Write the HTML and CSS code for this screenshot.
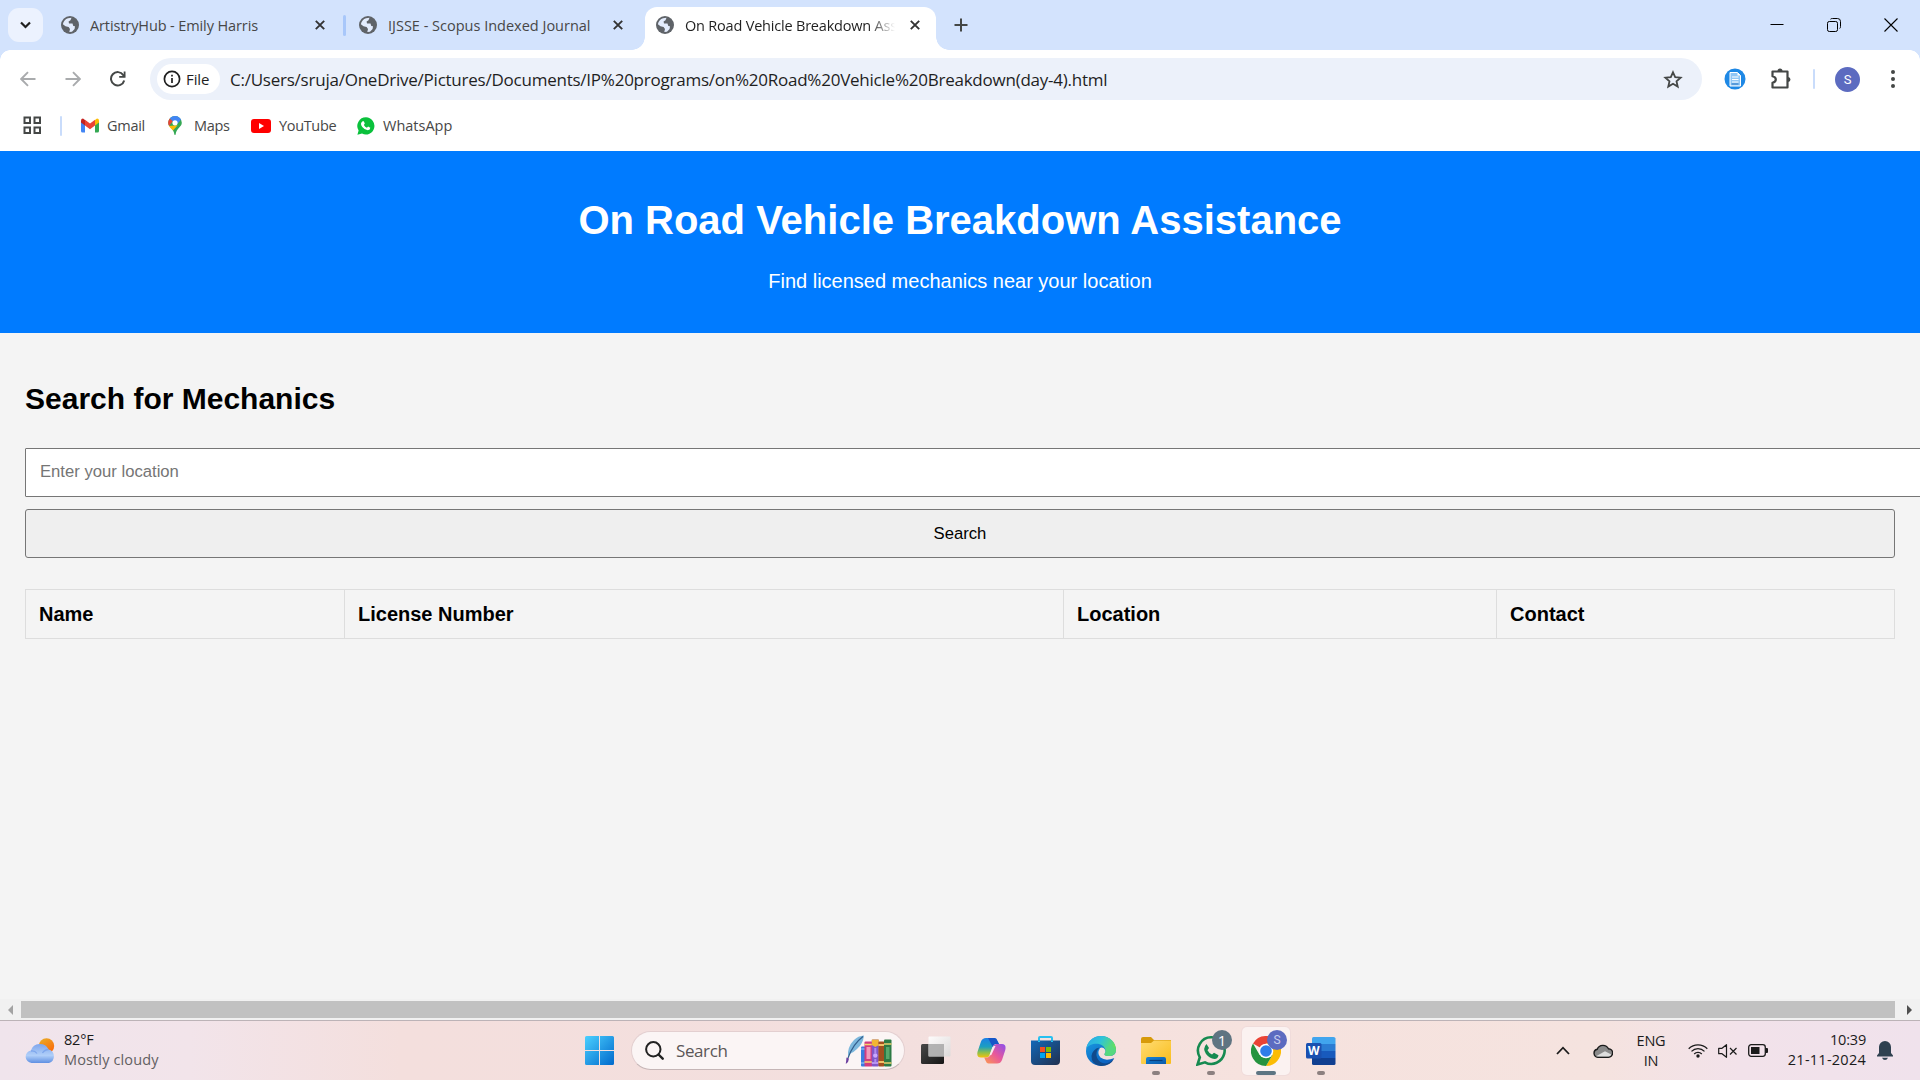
FILE: index.html
```html
<!DOCTYPE html>
<html lang="en">
<head>
<meta charset="utf-8">
<title>On Road Vehicle Breakdown Assistance</title>
<link rel="stylesheet" href="styles.css">
</head>
<body>
<svg class="defs" width="0" height="0" aria-hidden="true">
  <defs>
    <symbol id="globe" viewBox="0 0 18 18"><circle cx="9" cy="9" r="9" fill="#5f6368"/><path d="M7 2.2 10.500 1.800 9.500 4.200 7.600 5.600 8 7.400 11.500 7.600 12.300 10 14 10.200 13.600 13 11 15.800 8.300 15.900 9 13 7.600 11 4.500 10.300 1.900 8.200C2.300 5.200 4.400 3 7 2.200Z" fill="#e3ecfd"/><path d="M12.500 3.200 15.500 6.500 14 8 11.800 6Z" fill="#5f6368"/></symbol>
    <symbol id="cross" viewBox="0 0 10 10"><path d="M.8.8 9.200 9.200M9.200.8.8 9.200" stroke="currentColor" stroke-width="1.900" fill="none"/></symbol>
    <linearGradient id="gWin" x1="0" y1="0" x2="1" y2="1"><stop offset="0" stop-color="#4bd0ff"/><stop offset="1" stop-color="#0069cc"/></linearGradient>
    <linearGradient id="gSun" x1="0" y1="0" x2="0.6" y2="1"><stop offset="0" stop-color="#e8b02a"/><stop offset="1" stop-color="#fb6a08"/></linearGradient>
    <linearGradient id="gCloud" x1="0" y1="0" x2="0" y2="1"><stop offset="0" stop-color="#7fa6ec"/><stop offset=".6" stop-color="#b0cff9"/><stop offset="1" stop-color="#5f8fe2"/></linearGradient>
    <linearGradient id="gDark" x1="0" y1="0" x2="1" y2="1"><stop offset="0" stop-color="#484848"/><stop offset="1" stop-color="#161616"/></linearGradient>
    <linearGradient id="gLight" x1="0" y1="0" x2="1" y2="1"><stop offset="0" stop-color="#fff"/><stop offset="1" stop-color="#d9d9d9"/></linearGradient>
    <linearGradient id="gCopA" x1="0" y1="0" x2="0" y2="1"><stop offset="0" stop-color="#1b7fe8"/><stop offset=".45" stop-color="#1c9fc0"/><stop offset=".75" stop-color="#8fc04a"/><stop offset="1" stop-color="#f5c20b"/></linearGradient>
    <linearGradient id="gCopB" x1="1" y1="0" x2="0" y2="1"><stop offset="0" stop-color="#8a4fee"/><stop offset=".5" stop-color="#e8589b"/><stop offset="1" stop-color="#fd9a4e"/></linearGradient>
    <linearGradient id="gStore" x1="0" y1="0" x2="1" y2="1"><stop offset="0" stop-color="#1268b8"/><stop offset="1" stop-color="#21304f"/></linearGradient>
    <linearGradient id="gEdgeA" x1="0" y1="0" x2="1" y2=".4"><stop offset="0" stop-color="#2aa5e8"/><stop offset=".5" stop-color="#2fc3d8"/><stop offset="1" stop-color="#63e05e"/></linearGradient>
    <linearGradient id="gEdgeB" x1="0" y1="0" x2=".6" y2="1"><stop offset="0" stop-color="#1aa0e4"/><stop offset="1" stop-color="#0b5fc0"/></linearGradient>
    <linearGradient id="gFold" x1="0" y1="0" x2="1" y2="1"><stop offset="0" stop-color="#ffdc73"/><stop offset="1" stop-color="#f9bd1b"/></linearGradient>
    <linearGradient id="gTray" x1="0" y1="0" x2="1" y2="1"><stop offset="0" stop-color="#1783d8"/><stop offset="1" stop-color="#0b5aa8"/></linearGradient>
  </defs>
</svg>

<div class="window">
  <div class="tabstrip">
    <button class="tab-search"><svg width="11" height="8" viewBox="0 0 11 8"><path d="M1 1.500 5.500 6 10 1.500" fill="none" stroke="#1f1f1f" stroke-width="2.200"/></svg></button>
    <div class="tab tab-first"><svg class="globe"><use href="#globe"/></svg><span class="tab-title">ArtistryHub - Emily Harris</span><svg class="cross"><use href="#cross"/></svg></div>
    <i class="tab-divider"></i>
    <div class="tab tab-second"><svg class="globe"><use href="#globe"/></svg><span class="tab-title">IJSSE - Scopus Indexed Journal</span><svg class="cross"><use href="#cross"/></svg></div>
    <div class="tab tab-active"><svg class="globe"><use href="#globe"/></svg><span class="tab-title fade">On Road Vehicle Breakdown Assistance</span><svg class="cross"><use href="#cross"/></svg></div>
    <svg class="new-tab" width="14" height="14" viewBox="0 0 14 14"><path d="M7 .5v13M.5 7h13" stroke="#444746" stroke-width="2"/></svg>
    <div class="controls">
      <svg width="14" height="14" viewBox="0 0 14 14"><path d="M.5 6.500h13" stroke="#000" stroke-width="1"/></svg>
      <svg width="14" height="14" viewBox="0 0 14 14"><rect x=".5" y="3.500" width="10" height="10" rx="1.800" fill="none" stroke="#000"/><path d="M3.500 1.200Q4 .5 5.500.5h5Q13.500.5 13.500 3.500v5Q13.500 10 12.700 10.500" fill="none" stroke="#000"/></svg>
      <svg width="14" height="14" viewBox="0 0 14 14"><path d="M.5.5l13 13M13.500.5l-13 13" stroke="#000" stroke-width="1.100"/></svg>
    </div>
  </div>

  <div class="toolbar">
    <svg class="nav" width="16" height="16" viewBox="0 0 16 16"><path d="M15.500 8H1.500M8 1.200 1.200 8 8 14.800" fill="none" stroke="#a9abad" stroke-width="1.900"/></svg>
    <svg class="nav" width="16" height="16" viewBox="0 0 16 16"><path d="M.5 8h14M8 1.200 14.800 8 8 14.800" fill="none" stroke="#a9abad" stroke-width="1.900"/></svg>
    <svg class="nav" width="16" height="16" viewBox="0 0 16 16"><path d="M14.200 9.500A6.700 6.700 0 1 1 13.300 4.100L14.600 5.600" fill="none" stroke="#444746" stroke-width="2"/><path d="M15.500.5v6.300H9.200V5h4.500V.5z" fill="#444746"/></svg>
    <div class="omnibox">
      <div class="chip"><svg width="18" height="18" viewBox="0 0 18 18"><circle cx="9" cy="9" r="7.600" fill="none" stroke="#1f1f1f" stroke-width="1.700"/><path d="M9 8v5M9 4.800v1.800" stroke="#1f1f1f" stroke-width="1.700"/></svg><span>File</span></div>
      <span class="url">C:/Users/sruja/OneDrive/Pictures/Documents/IP%20programs/on%20Road%20Vehicle%20Breakdown(day-4).html</span>
      <svg class="star" width="20" height="19" viewBox="0 0 20 19"><path d="M10 2.300 12.200 7.200 17.600 7.700 13.500 11.300 14.700 16.600 10 13.800 5.300 16.600 6.500 11.300 2.400 7.700 7.800 7.200Z" fill="none" stroke="#444746" stroke-width="1.800"/></svg>
    </div>
    <svg class="ext" width="22" height="22" viewBox="0 0 22 22"><circle cx="11" cy="11" r="10.500" fill="#1e88e5"/><path d="M6 4.500h7.500l3 3V18H6z" fill="#90c6f5" stroke="#fff" stroke-width="1"/><path d="M13.500 4.500v3h3z" fill="#fff"/><path d="M8 9h6.500M8 11.500h6.500M8 14h6.500" stroke="#fff" stroke-width="1"/><path d="M7.500 16h7" stroke="#1e6fc0"/></svg>
    <svg class="puzzle" width="22" height="22" viewBox="0 0 22 22"><path d="M2.500 3.500H17.500V19.500H2.500V14.800Q5.800 14 5.800 11.500T2.500 8.200Z" fill="none" stroke="#444746" stroke-width="2.200" stroke-linejoin="round"/><path d="M7.500 3a2.500 2.500 0 0 1 5 0zM18 9a2.500 2.500 0 0 1 0 5z" fill="#444746"/></svg>
    <i class="bar-divider"></i>
    <span class="avatar">S</span>
    <svg class="dots" width="6" height="20" viewBox="0 0 6 20"><g fill="#444746"><circle cx="3" cy="3" r="2"/><circle cx="3" cy="10" r="2"/><circle cx="3" cy="17" r="2"/></g></svg>
  </div>

  <div class="bookmarks">
    <svg class="apps" width="19" height="19" viewBox="0 0 19 19"><g fill="none" stroke="#444746" stroke-width="2"><path d="M1.500 1.500h5.500v5.500H1.500zM11.500 1.500H17v5.500h-5.500zM1.500 11.500h5.500V17H1.500zM11.500 11.500H17V17h-5.500z"/></g></svg>
    <i class="bar-divider"></i>
    <a class="bm bm-mail"><svg width="20" height="15" viewBox="0 0 20 15"><path d="M1 3v10q0 1.500 1.500 1.500H5V6z" fill="#4285f4"/><path d="M19 3v10q0 1.500-1.500 1.500H15V6z" fill="#34a853"/><path d="M15 2v5.500l4-3V2.500q0-2-2-2z" fill="#fbbc04"/><path d="M5 2v5.500l-4-3V2.500q0-2 2-2z" fill="#c5221f"/><path d="M5 7.500V1.700l5 3.900 5-3.900v5.800l-5 3.800z" fill="#ea4335"/></svg><span>Gmail</span></a>
    <a class="bm bm-maps"><svg width="14" height="19" viewBox="0 0 14 19"><path d="M7 0a6.800 6.800 0 0 1 6.800 6.800C13.800 11 8.500 12 7.600 18.500q-.6 1-1.200 0C5.500 12 .2 11 .2 6.800A6.800 6.800 0 0 1 7 0z" fill="#34a853"/><path d="M1 10 9.700 9.200 5 14.400Q2.200 12 1 10z" fill="#fbbc04"/><path d="M.2 6.800Q.2 4.400 1.800 2.400L5 5 1 10Q.2 8.500.2 6.800z" fill="#ea4335"/><path d="M1.800 2.400A6.800 6.800 0 0 1 13 3.600L9.800 7.400 4.800 5.200z" fill="#4285f4"/><circle cx="7" cy="6.800" r="2.600" fill="#fff"/></svg><span>Maps</span></a>
    <a class="bm bm-tube"><svg width="20" height="14" viewBox="0 0 20 14"><rect width="20" height="14" rx="3" fill="#f00"/><path d="M8 4v6l5-3z" fill="#fff"/></svg><span>YouTube</span></a>
    <a class="bm bm-wa"><svg width="18" height="18" viewBox="0 0 18 18"><path d="M9 .3a8.600 8.600 0 1 1-4 16.300L.4 17.700l1.200-4.300A8.600 8.600 0 0 1 9 .3z" fill="#0ac13c"/><path d="M5.600 4.300h1.200l1 2.300-.9 1.300q1 2 3 2.900l1.200-1.200 2.200 1.100q.1 2.200-2.500 2.600-3.200-.2-5.500-3.200-2.800-3.700.3-5.800z" fill="#fff"/></svg><span>WhatsApp</span></a>
  </div>

  <div class="page">
    <header class="hero">
      <h1>On Road Vehicle Breakdown Assistance</h1>
      <p>Find licensed mechanics near your location</p>
    </header>
    <main class="content">
      <h2>Search for Mechanics</h2>
      <input class="location" type="text" placeholder="Enter your location">
      <button class="go">Search</button>
      <table class="results">
        <colgroup><col class="c1"><col class="c2"><col class="c3"><col class="c4"></colgroup>
        <tr><th>Name</th><th>License Number</th><th>Location</th><th>Contact</th></tr>
      </table>
    </main>
    <div class="scrollbar"><svg width="5" height="10" viewBox="0 0 5 10"><path d="M5 0v10L0 5z" fill="#a3a3a3"/></svg><i class="thumb"></i><svg width="5" height="10" viewBox="0 0 5 10"><path d="M0 0v10l5-5z" fill="#505050"/></svg></div>
  </div>
</div>

<footer class="taskbar">
  <div class="weather">
    <svg width="31" height="26" viewBox="0 0 31 26"><circle cx="21.500" cy="8" r="7.700" fill="url(#gSun)"/><path d="M6.500 25a6.300 6.300 0 0 1-.6-12.500A9.500 9.500 0 0 1 23.500 11.500 7 7 0 0 1 24 25z" fill="url(#gCloud)"/><path d="M6 13q4-.5 6 2.500M23.500 11.500q-4 .2-6 3.500" fill="none" stroke="#7ea6ec" stroke-width="1.300"/></svg>
    <div class="weather-text"><span class="deg">82°F</span><span class="sky">Mostly cloudy</span></div>
  </div>
  <div class="dock">
    <svg width="29" height="29" viewBox="0 0 29 29"><path d="M0 1.500Q0 0 1.500 0H14v14H0zM15 0h12.500Q29 0 29 1.500V14H15zM0 15h14v14H1.500Q0 29 0 27.500zM15 15h14v12.500Q29 29 27.500 29H15z" fill="url(#gWin)"/></svg>
    <div class="search">
      <svg width="19" height="19" viewBox="0 0 19 19"><circle cx="8.300" cy="8.300" r="7.200" fill="none" stroke="#222" stroke-width="2"/><path d="M13.500 13.500 17.700 17.700" stroke="#222" stroke-width="2.400" stroke-linecap="round"/></svg>
      <span class="search-label">Search</span>
      <svg class="books" width="47" height="32" viewBox="0 0 47 32"><path d="M3 22Q2 12 9 5 13 .8 19 .5 18 9 12 14 8 18 4.500 19z" fill="#7db8dd"/><path d="M18 1.500Q8 9 3 23" fill="none" stroke="#335e8c" stroke-width="1.200"/><path d="M1.500 22.500l2.500 1L3 27 .8 29z" fill="#6b3fa0"/><rect x="16" y="11.500" width="4.500" height="20" rx="1" fill="#3a7de0"/><path d="M16 14h4.500M16 28h4.500" stroke="#9fd2ff"/><rect x="19.500" y="6.500" width="8" height="25" rx="1" fill="#d23d80"/><rect x="21.500" y="12" width="4" height="12" fill="#f19abb"/><path d="M19.500 9.500h8M19.500 27h8" stroke="#f8d56a" stroke-width="1.500"/><rect x="26.800" y="4.500" width="7" height="27" rx="1" fill="#8058c8"/><path d="M26.800 4.500h7V10l-3.500 2-3.500-2z" fill="#f2b632"/><path d="M30.300 13v5M30.300 24v3" stroke="#b08cf0" stroke-width="2"/><circle cx="30.300" cy="20.500" r="2.200" fill="#c9a8ff"/><path d="M26.800 28h7" stroke="#c9a8ff" stroke-width="1.500"/><rect x="33.400" y="6.500" width="6" height="25" rx="1" fill="#a2501f"/><path d="M33.400 10h6M33.400 27h6" stroke="#f3c268" stroke-width="2"/><rect x="39" y="4.500" width="7.500" height="27" rx="1" fill="#2c7a45"/><path d="M39 9h7.500M39 28h7.500" stroke="#e5cf6e" stroke-width="1.500"/><rect x="41" y="12" width="3.500" height="12" fill="#56a86c"/></svg>
    </div>
    <svg class="views" width="30" height="29" viewBox="0 0 30 29"><rect x="0" y="8" width="23" height="20" rx="1.500" fill="url(#gDark)"/><rect x="7.500" y=".5" width="22" height="20" rx="1" fill="url(#gLight)" opacity=".9"/><path d="M7.500 8H23v12.500H7.500z" fill="#aaa" opacity=".85"/></svg>
    <svg class="copilot" width="29" height="27" viewBox="0 0 29 27"><path d="M9 1h8.500q2 0 3 3L22 7h-3q-2.500 0-3.300 3L13 17.500Q12 20.500 9 20.500H4Q-.8 20.500.6 14.500L4 4.500Q5.300 1 9 1z" fill="url(#gCopA)"/><path d="M11 1h6.500q2 0 3 3L22 7h-3q-2.500 0-3.300 3z" fill="#1656c8"/><path d="M20 26.500h-8.500q-2 0-3-3L7.200 20.500H10q2.500 0 3.300-3L16 10Q17 7 20 7h5q4.500 0 3.300 6L25 23q-1.300 3.500-5 3.500z" fill="url(#gCopB)"/><path d="M15.500 10 17 9h1.500l-4.200 9-2 .5z" fill="#fbe9f2"/></svg>
    <svg class="store" width="29" height="29" viewBox="0 0 29 29"><path d="M8 6V2Q8 1 9 1h11q1 0 1 1v4" fill="none" stroke="#28c0f0" stroke-width="2"/><path d="M0 4.500h29V25q0 4-4 4H4q-4 0-4-4z" fill="url(#gStore)"/><path d="M7 4.500h2V6H7zM20 4.500h2V6h-2z" fill="#28c0f0"/><path d="M9 11h5v5H9z" fill="#f25022"/><path d="M15 11h5v5h-5z" fill="#7fba00"/><path d="M9 17h5v5H9z" fill="#00a4ef"/><path d="M15 17h5v5h-5z" fill="#ffb900"/></svg>
    <svg class="edge" width="30" height="30" viewBox="0 0 30 30"><circle cx="15" cy="15" r="15" fill="url(#gEdgeB)"/><path d="M.3 12.500C1.500 5 7.500 0 15 0c9 0 15 6.500 15 13.500 0 4-3 6.500-7 6.500-3 0-5-1-4.500-2 1-1 1.500-2.500 1-4C18.500 10 15 7.700 10.500 7.700 6 7.700 2 9.500.3 12.500z" fill="url(#gEdgeA)"/><path d="M13.500 11.500Q9 16 11 21.500 13 27 19.500 27.500 24.500 27 28.300 22.300 25 29.800 15 30 5 28.500 5.500 20 6.500 13 13.500 11.500z" fill="#114a8b"/><path d="M14 12Q10.500 17.500 14.500 21.500 19.500 25.500 28.500 22L30 24V14Q30 20 23 20 18 20 18.500 18 20 16 19.300 14 17 10.500 14 12z" fill="#f2dfde"/><path d="M30 13.500C30 17.500 27 20 23 20c-3 0-5-1-4.500-2 1-1 1.500-2.500 1-4L24 8z" fill="#55d880"/></svg>
    <div class="app"><svg width="30" height="28" viewBox="0 0 30 28"><path d="M0 2q0-2 2-2h8l3 3h17v5H0z" fill="#d79a09"/><path d="M0 6h10l3-2.500h17V26q0 1-1 1H1q-1 0-1-1z" fill="url(#gFold)"/><path d="M5 27v-5q0-2 2-2h16q2 0 2 2v5z" fill="url(#gTray)"/><path d="M8.500 23.500h13" stroke="#073f7e" stroke-width="1.200"/></svg><i class="run"></i></div>
    <div class="app"><svg width="30" height="30" viewBox="0 0 30 30"><path d="M15.500 1.300A13.300 13.300 0 1 1 9 26.300L1.500 28.500 3.800 21.300A13.300 13.300 0 0 1 15.500 1.300z" fill="none" stroke="#168a50" stroke-width="2.600"/><path d="M10.500 8 13 12l-1.500 2.300q1.500 3 4.500 4.200l2-1.800 4.500 2.500q-.5 3.500-4 3.800-5-.5-8.500-5-3.800-5.500.5-10z" fill="#168a50"/></svg><b class="badge">1</b><i class="run"></i></div>
    <div class="app current"><svg width="30" height="30" viewBox="0 0 30 30"><path d="M15 15 2 7.500A15 15 0 0 1 28 7.500H15z" fill="#ea4335"/><path d="M15 7.500h13A15 15 0 0 1 15 30l6.500-11.200z" fill="#fbbc05"/><path d="M2 7.500 8.500 18.800 21.500 18.800 15 30A15 15 0 0 1 2 7.500z" fill="#25933f"/><circle cx="15" cy="15" r="7.300" fill="#fff"/><circle cx="15" cy="15" r="5.800" fill="#2f7de9"/></svg><b class="badge profile">S</b><i class="run"></i></div>
    <div class="app word"><svg width="30" height="28" viewBox="0 0 30 28"><path d="M6 1.500Q6 0 7.500 0h20Q29.500 0 29.500 1.500V7H6z" fill="#41a5ee"/><path d="M6 7h23.500v7H6z" fill="#2b7cd3"/><path d="M6 14h23.500v7H6z" fill="#185abd"/><path d="M6 21h23.500v5.500q0 1.500-1.500 1.500H7.500Q6 28 6 26.500z" fill="#103f91"/><rect x="0" y="6" width="15.500" height="15.500" rx="1.500" fill="#1a50b0"/><text x="7.700" y="18" text-anchor="middle" class="w">W</text></svg><i class="run"></i></div>
  </div>
  <div class="tray">
    <svg class="up" width="14" height="9" viewBox="0 0 14 9"><path d="M1 8 7 1.700 13 8" fill="none" stroke="#1b1b1b" stroke-width="1.800"/></svg>
    <svg class="drive" width="20" height="14" viewBox="0 0 20 14"><path d="M4.800 13.200A4 4 0 0 1 4.200 5.300 6.200 6.200 0 0 1 15.500 4.800 4.200 4.200 0 0 1 15.400 13.200z" fill="#8a8a8a" stroke="#1b1b1b" stroke-width="1.400"/><path d="M3 12.300 12 7.200 18.300 10.500Q17.500 12.400 15.400 12.500H4.800z" fill="#dedede"/></svg>
    <div class="lang"><span>ENG</span><span>IN</span></div>
    <svg class="wifi" width="20" height="15" viewBox="0 0 20 15"><g fill="none" stroke="#1b1b1b" stroke-width="1.300"><path d="M.7 5.800a13 13 0 0 1 18.600 0M3.500 8.400a9.200 9.200 0 0 1 13 0M6.200 11a5.400 5.400 0 0 1 7.600 0"/></g><circle cx="10" cy="13" r="1.700" fill="#1b1b1b"/></svg>
    <svg class="mute" width="20" height="14" viewBox="0 0 20 14"><path d="M.7 4.300H4L8.500.7v12.600L4 9.700H.7z" fill="none" stroke="#1b1b1b" stroke-width="1.200" stroke-linejoin="round"/><path d="M12 4l6.500 6.500M18.500 4 12 10.500" stroke="#1b1b1b" stroke-width="1.200"/></svg>
    <svg class="battery" width="20" height="13" viewBox="0 0 20 13"><rect x=".7" y=".7" width="16.600" height="11.600" rx="2.500" fill="none" stroke="#1b1b1b" stroke-width="1.300"/><path d="M3 3h8.500v7H3z" fill="#1b1b1b"/><path d="M17.500 4H19q1 0 1 1v3q0 1-1 1h-1.500z" fill="#1b1b1b"/></svg>
    <div class="clock"><span class="time">10:39</span><span class="date">21-11-2024</span></div>
    <svg class="bell" width="16" height="19" viewBox="0 0 16 19"><path d="M8 0a6 6 0 0 1 6 6v6l2 2.500v1H0v-1L2 12V6a6 6 0 0 1 6-6zM5 16.800h6Q10 19 8 19T5 16.800z" fill="#2f4150"/></svg>
  </div>
</footer>
</body>
</html>
```
FILE: styles.css
```css
* { box-sizing: border-box; }
body { margin: 0; width: 1920px; height: 1080px; overflow: hidden; display: flex; flex-direction: column; font-family: "Open Sans", "Noto Sans", sans-serif; }
svg { display: block; flex: none; }
button { font-family: inherit; }
.defs { position: absolute; }
.window { height: 1020px; display: flex; flex-direction: column; background: #fff; }

/* tab strip */
.tabstrip { height: 50px; flex: none; background: #d3e3fd; display: flex; align-items: flex-start; padding-left: 8px; }
.tab-search { width: 35px; height: 34px; margin-top: 8px; padding: 0; border: 0; border-radius: 11px; background: #ecf2fe; display: flex; align-items: center; justify-content: center; }
.tab { height: 50px; display: flex; align-items: center; font-size: 14.5px; color: #474747; white-space: nowrap; }
.globe { width: 18px; height: 18px; margin-right: 11px; }
.cross { width: 10px; height: 10px; color: #333; }
.tab-title { flex: 1; overflow: hidden; }
.tab-first { width: 282px; padding-left: 18px; letter-spacing: -.11px; }
.tab-divider { width: 3px; height: 21px; margin: 15px 0 0 18px; border-radius: 2px; background: #a8c7fa; }
.tab-second { width: 299px; padding: 0 22px 0 13px; }
.tab-active { position: relative; width: 291px; height: 43px; margin-top: 7px; padding: 0 16px 7px 11px; border-radius: 12px 12px 0 0; background: #fff; color: #1f1f1f; letter-spacing: -.2px; }
.tab-active::before, .tab-active::after { content: ""; position: absolute; bottom: 0; width: 13px; height: 13px; }
.tab-active::before { left: -13px; background: radial-gradient(circle at 0 0, transparent 12.5px, #fff 13px); }
.tab-active::after { right: -13px; background: radial-gradient(circle at 100% 0, transparent 12.5px, #fff 13px); }
.fade { margin-right: 15px; -webkit-mask-image: linear-gradient(90deg, #000 184px, transparent 210px); mask-image: linear-gradient(90deg, #000 184px, transparent 210px); }
.new-tab { margin: 18px 0 0 18px; }
.controls { margin: 18px 22px 0 auto; display: flex; gap: 43px; }

/* toolbar */
.toolbar { position: relative; height: 58px; flex: none; display: flex; align-items: center; padding-left: 20px; background: #fff; }
.toolbar::before { content: ""; position: absolute; inset: 0 0 auto; height: 10px; background: radial-gradient(circle at 10px 10px, transparent 9.5px, #d3e3fd 10px) 0 0 / 10px 10px no-repeat, radial-gradient(circle at 0 10px, transparent 9.5px, #d3e3fd 10px) 100% 0 / 10px 10px no-repeat; }
.nav { margin-right: 29px; }
.omnibox { width: 1552px; height: 42px; margin-left: -5px; border-radius: 21px; background: #ecf1fa; display: flex; align-items: center; padding: 0 19px 0 7px; }
.chip { width: 63px; height: 30px; border-radius: 15px; background: #fff; display: flex; align-items: center; gap: 5px; padding: 0 0 1px 6px; font-size: 15px; color: #1f1f1f; letter-spacing: -.1px; }
.url { margin-left: 10px; font-size: 17px; letter-spacing: -.235px; color: #1f1f1f; white-space: nowrap; }
.star { margin-left: auto; }
.ext { margin-left: 22px; }
.puzzle { margin-left: 24px; }
.bar-divider { width: 2px; height: 20px; margin-left: 21px; background: #c9dcfb; border-radius: 1px; }
.avatar { width: 25px; height: 25px; margin-left: 20px; border-radius: 50%; background: #5c6bc0; color: #fff; font: 13px/25px Roboto, sans-serif; text-align: center; }
.dots { margin-left: 30px; }

/* bookmarks */
.bookmarks { height: 43px; flex: none; display: flex; align-items: center; padding: 0 0 8px 23px; }
.bookmarks .bar-divider { margin-left: 18px; }
.bm { display: flex; align-items: center; gap: 7px; font-size: 14.5px; color: #474747; white-space: nowrap; }
.bm span { margin-top: -1px; }
.bm-mail { width: 88px; margin-left: 18px; letter-spacing: -.27px; }
.bm-maps { width: 82px; gap: 12px; letter-spacing: -.3px; }
.bm-tube { width: 107px; gap: 8px; letter-spacing: -.34px; }
.bm-tube svg { margin-left: 1px; }
.bm-wa { gap: 8px; }

/* document */
.page { flex: 1; display: flex; flex-direction: column; background: #f4f4f4; font-family: "Liberation Sans", Arial, sans-serif; overflow: hidden; }
.hero { height: 182px; flex: none; padding: 25px; background: #007bff; color: #fff; text-align: center; }
.hero h1 { margin: 21px 0 0; font-size: 40px; line-height: 46px; }
.hero p { margin: 27px 0 0; font-size: 20px; line-height: 23px; }
.content { flex: 1; padding: 48px 25px 0; overflow: hidden; display: flex; flex-direction: column; }
.content h2 { margin: 0 0 32px; font-size: 30px; line-height: 35px; color: #000; }
.location { flex: none; width: 1896px; height: 49px; padding: 0 13px 1px 14px; border: 1px solid #767676; border-radius: 1px; background: #fff; font: 16.67px "Liberation Sans", Arial, sans-serif; }
.location::placeholder { color: #757575; }
.go { flex: none; width: 1870px; height: 49px; margin-top: 12px; border: 1px solid #767676; border-radius: 3px; background: #efefef; color: #000; font-size: 16.67px; }
.results { width: 1870px; margin-top: 31px; border-collapse: collapse; table-layout: fixed; }
.c1 { width: 319px; }
.c2 { width: 719px; }
.c3 { width: 433px; }
.c4 { width: 398px; }
.results th { height: 49px; padding: 0 12px 0 13px; border: 1px solid #ddd; font-size: 20px; text-align: left; }
.scrollbar { height: 21px; flex: none; display: flex; align-items: center; padding: 0 8px; background: #f1f1f1; }
.thumb { flex: 1; height: 17px; margin: 0 12px 0 8px; background: #c1c1c1; }

/* taskbar */
.taskbar { height: 60px; display: flex; align-items: center; border-top: 1px solid #bcb3b7; background: linear-gradient(90deg, #f0e4ec 0, #f2e4ea 190px, #f4dfdd 400px, #f3dfde 900px, #f6e2de 1250px, #f5e3df 1600px, #f2e2ea 1740px, #f0e2ec 100%); }
.weather { width: 585px; padding-left: 25px; display: flex; align-items: center; gap: 8px; }
.weather-text { display: flex; flex-direction: column; align-items: flex-start; padding-bottom: 2px; font-size: 14.5px; line-height: 20px; }
.deg { color: #1b1b1b; letter-spacing: -.2px; }
.sky { color: #626062; letter-spacing: .13px; }
.dock { display: flex; align-items: center; }
.search { width: 274px; height: 39px; margin: 0 16px 0 17px; padding: 0 13px; border: 1px solid #e3cfd0; border-bottom-color: #c5b5b6; border-radius: 20px; background: #fbf5f5; display: flex; align-items: center; gap: 12px; font-size: 17px; color: #5b5757; }
.search-label { letter-spacing: -.4px; }
.books { margin: 0 -1px 0 auto; }
.copilot { margin-left: 26px; }
.store { margin-left: 25px; }
.edge { margin: 0 16px 0 26px; }
.app { position: relative; width: 48px; height: 48px; margin-right: 7px; display: flex; align-items: center; justify-content: center; border-radius: 5px; }
.current { background: #fbf2f1; box-shadow: 0 0 0 1px #f0dcdb; }
.run { position: absolute; left: 20px; bottom: 0; width: 8px; height: 4px; border-radius: 2px; background: #8c8080; }
.current .run { left: 14px; width: 20px; background: #5d7583; }
.badge { position: absolute; left: 25px; top: 3px; width: 20px; height: 20px; border-radius: 50%; background: #5f7481; color: #fff; font: 15px/20px "Open Sans", sans-serif; text-align: center; }
.profile { background: #5c6bc0; color: #c9cfee; font: 12px/20px Roboto, sans-serif; }
.w { font: bold 12px "Open Sans", sans-serif; fill: #fff; }
.tray { margin-left: auto; padding-right: 27px; display: flex; align-items: center; color: #1b1b1b; font-size: 14.5px; line-height: 20px; }
.drive { margin-left: 23px; }
.lang { width: 48px; margin-left: 14px; display: flex; flex-direction: column; align-items: center; letter-spacing: -.2px; }
.wifi { margin-left: 13px; }
.mute { margin-left: 10px; }
.battery { margin-left: 10px; }
.clock { width: 98px; padding-bottom: 2px; display: flex; flex-direction: column; align-items: flex-end; }
.time { letter-spacing: -.2px; }
.date { letter-spacing: .25px; }
.bell { margin-left: 11px; }
```
